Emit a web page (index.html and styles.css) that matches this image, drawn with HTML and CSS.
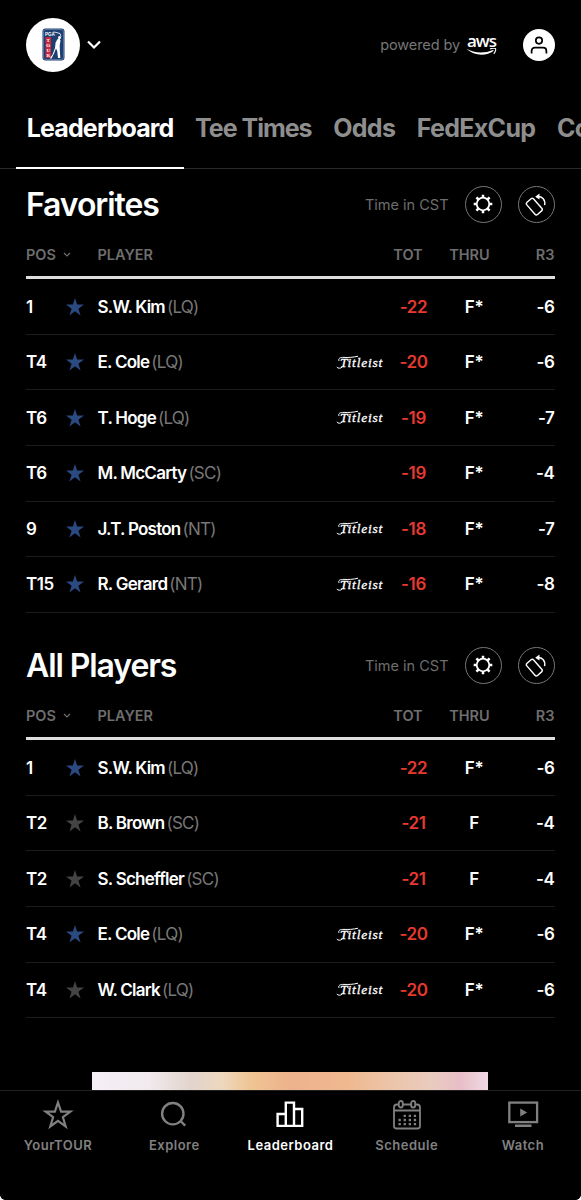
FILE: index.html
```html
<!DOCTYPE html>
<html lang="en">
<head>
<meta charset="UTF-8">
<meta name="viewport" content="width=device-width, initial-scale=1.0">
<title>PGA TOUR - Leaderboard</title>
<link rel="stylesheet" href="styles.css">
</head>
<body>
<!-- shared icons -->
<svg class="sprite" aria-hidden="true">
  <symbol id="star" viewBox="0 0 18 18"><path d="M9 0l2.1 6.6H18l-5.6 4.1 2.2 6.8L9 13.3l-5.6 4.2 2.2-6.8L0 6.6h6.9z" fill="currentColor"/></symbol>
  <symbol id="gear" viewBox="0 0 20 20">
    <circle cx="10" cy="10" r="6.3" fill="none" stroke="currentColor" stroke-width="1.8"/>
    <path d="M10 .7v3M10 16.3v3M.7 10h3M16.3 10h3M3.4 3.4l2.1 2.1M14.5 14.5l2.1 2.1M16.6 3.4l-2.1 2.1M5.5 14.5l-2.1 2.1" stroke="currentColor" stroke-width="2.5"/>
  </symbol>
  <symbol id="rotate" viewBox="0 0 24 24">
    <rect x="5.8" y="6.6" width="9" height="16" rx="1.8" transform="rotate(-41 10.3 14.6)" fill="none" stroke="currentColor" stroke-width="1.4"/>
    <path d="M12.500 4.600c5.500-.8 9.200 3.200 8.100 8.600" fill="none" stroke="currentColor" stroke-width="1.400"/>
    <path d="M15.500 1.600v6L11.200 4.800z" fill="currentColor"/>
  </symbol>
  <symbol id="caret" viewBox="0 0 8 6"><path d="M1 1l3 3 3-3" fill="none" stroke="currentColor" stroke-width="1.2"/></symbol>
  <symbol id="swash" viewBox="0 0 48 14"><path d="M3 6C2 3.400 4 2.200 8 2.400s9 .1 14-1.200M6 12.200C4.500 13.600 2 13.600.8 12" fill="none" stroke="currentColor" stroke-width="1"/></symbol>
</svg>

<header>
  <div class="brand">
    <div class="brand-circle">
      <svg width="23" height="33" viewBox="0 0 23 33">
        <rect x=".5" y=".5" width="22" height="32" rx="3" fill="#1d3f72"/>
        <rect x="1.500" y="1.500" width="20" height="30" rx="2.200" fill="none" stroke="#8fa3c0" stroke-width=".5"/>
        <rect x="3.500" y="9" width="5.500" height="21" fill="#c8283c"/>
        <text x="3" y="8.300" class="logo-pga">PGA</text>
        <g class="logo-tour"><text x="6.250" y="14.300">T</text><text x="6.250" y="19.300">O</text><text x="6.250" y="24.300">U</text><text x="6.250" y="29.300">R</text></g>
        <circle cx="17.500" cy="9.500" r="1.500" fill="#fff"/>
        <path d="M11.500 3.800l6.500 1.700 1 3" fill="none" stroke="#fff" stroke-width=".8"/>
        <path d="M17.500 10.500l1 2-.8 5 .2 6 .4 6.500h-2.300l-.8-7-1.200-2.500-2 5-2.500 5H7.800l2.700-4 2.500-6.500.6-5.500 2-3.500z" fill="#fff"/>
      </svg>
    </div>
    <svg class="brand-caret" width="14" height="10" viewBox="0 0 14 10"><path d="M1 1.500l6 6 6-6" fill="none" stroke="#fff" stroke-width="2.200"/></svg>
  </div>
  <div class="header-right">
    <span class="powered">powered by</span>
    <div class="aws">
      <span>aws</span>
      <svg width="31" height="8" viewBox="0 0 31 8"><path d="M.3.800c8 4.500 18.500 4.700 26.700 1.100l.8.900C20 8.600 8 8 .3.800z" fill="#fff"/><path d="M24 .900c2-.8 5.200-1 5.600-.1.400 1-.5 3.800-1.900 5" fill="none" stroke="#fff" stroke-width="1.100"/></svg>
    </div>
    <div class="profile">
      <svg width="18" height="18" viewBox="0 0 18 18" fill="none" stroke="#000" stroke-width="1.700"><circle cx="9" cy="4.600" r="3.200"/><path d="M1.600 17.500v-2.600c0-2 1.200-3.300 3.300-3.300h8.200c2.100 0 3.300 1.300 3.300 3.300v2.600"/></svg>
    </div>
  </div>
</header>

<div class="tabs">
  <a class="tab active">Leaderboard</a>
  <a class="tab tee-times">Tee Times</a>
  <a class="tab">Odds</a>
  <a class="tab">FedExCup</a>
  <a class="tab">Course</a>
</div>

<main>
  <section class="board">
    <div class="board-title">
      <h2>Favorites</h2>
      <span class="timezone">Time in CST</span>
      <div class="round-btn"><svg width="20" height="20"><use href="#gear"/></svg></div>
      <div class="round-btn"><svg width="24" height="24"><use href="#rotate"/></svg></div>
    </div>
    <div class="board-head">
      <span>POS <svg width="8" height="6"><use href="#caret"/></svg></span><span>PLAYER</span><span class="mid">TOT</span><span class="mid">THRU</span><span class="end">R3</span>
    </div>
    <div class="row"><span>1</span><svg class="star fav"><use href="#star"/></svg><span class="name">S.W. Kim <em>(LQ)</em></span><span></span><span class="tot">-22</span><span class="mid">F*</span><span class="end">-6</span></div>
    <div class="row"><span>T4</span><svg class="star fav"><use href="#star"/></svg><span class="name">E. Cole <em>(LQ)</em></span><span class="sponsor">Titleist<svg><use href="#swash"/></svg></span><span class="tot">-20</span><span class="mid">F*</span><span class="end">-6</span></div>
    <div class="row"><span>T6</span><svg class="star fav"><use href="#star"/></svg><span class="name">T. Hoge <em>(LQ)</em></span><span class="sponsor">Titleist<svg><use href="#swash"/></svg></span><span class="tot">-19</span><span class="mid">F*</span><span class="end">-7</span></div>
    <div class="row"><span>T6</span><svg class="star fav"><use href="#star"/></svg><span class="name">M. McCarty <em>(SC)</em></span><span></span><span class="tot">-19</span><span class="mid">F*</span><span class="end">-4</span></div>
    <div class="row"><span>9</span><svg class="star fav"><use href="#star"/></svg><span class="name">J.T. Poston <em>(NT)</em></span><span class="sponsor">Titleist<svg><use href="#swash"/></svg></span><span class="tot">-18</span><span class="mid">F*</span><span class="end">-7</span></div>
    <div class="row"><span>T15</span><svg class="star fav"><use href="#star"/></svg><span class="name">R. Gerard <em>(NT)</em></span><span class="sponsor">Titleist<svg><use href="#swash"/></svg></span><span class="tot">-16</span><span class="mid">F*</span><span class="end">-8</span></div>
  </section>

  <section class="board">
    <div class="board-title">
      <h2>All Players</h2>
      <span class="timezone">Time in CST</span>
      <div class="round-btn"><svg width="20" height="20"><use href="#gear"/></svg></div>
      <div class="round-btn"><svg width="24" height="24"><use href="#rotate"/></svg></div>
    </div>
    <div class="board-head">
      <span>POS <svg width="8" height="6"><use href="#caret"/></svg></span><span>PLAYER</span><span class="mid">TOT</span><span class="mid">THRU</span><span class="end">R3</span>
    </div>
    <div class="row"><span>1</span><svg class="star fav"><use href="#star"/></svg><span class="name">S.W. Kim <em>(LQ)</em></span><span></span><span class="tot">-22</span><span class="mid">F*</span><span class="end">-6</span></div>
    <div class="row"><span>T2</span><svg class="star"><use href="#star"/></svg><span class="name">B. Brown <em>(SC)</em></span><span></span><span class="tot">-21</span><span class="mid">F</span><span class="end">-4</span></div>
    <div class="row"><span>T2</span><svg class="star"><use href="#star"/></svg><span class="name">S. Scheffler <em>(SC)</em></span><span></span><span class="tot">-21</span><span class="mid">F</span><span class="end">-4</span></div>
    <div class="row"><span>T4</span><svg class="star fav"><use href="#star"/></svg><span class="name">E. Cole <em>(LQ)</em></span><span class="sponsor">Titleist<svg><use href="#swash"/></svg></span><span class="tot">-20</span><span class="mid">F*</span><span class="end">-6</span></div>
    <div class="row"><span>T4</span><svg class="star"><use href="#star"/></svg><span class="name">W. Clark <em>(LQ)</em></span><span class="sponsor">Titleist<svg><use href="#swash"/></svg></span><span class="tot">-20</span><span class="mid">F*</span><span class="end">-6</span></div>
  </section>

  <div class="ad"></div>
</main>

<nav>
  <a>
    <svg width="32" height="32" viewBox="0 0 32 32"><path d="M16 3.500l3.100 9.100h9.300l-7.500 5.600 2.800 9.200-7.700-5.500-7.700 5.500 2.800-9.200-7.500-5.600h9.300z" fill="none" stroke="currentColor" stroke-width="2.200"/></svg>
    YourTOUR
  </a>
  <a>
    <svg width="32" height="32" viewBox="0 0 32 32" fill="none" stroke="currentColor" stroke-width="2.400"><circle cx="14.800" cy="14.700" r="10.700"/><path d="M22.500 22l4.700 4.700"/></svg>
    Explore
  </a>
  <a class="active">
    <svg width="32" height="32" viewBox="0 0 32 32" fill="none" stroke="currentColor" stroke-width="2.400"><path d="M3.600 26.900V15h8.200v11.900zM11.800 26.900V3.600H20v23.300zM20 26.900V10h8.200v16.900z"/></svg>
    Leaderboard
  </a>
  <a>
    <svg width="32" height="32" viewBox="0 0 32 32" fill="none" stroke="currentColor" stroke-width="1.800">
      <path d="M7.500 5.500H6a3 3 0 0 0-3 3v18.500a2.500 2.500 0 0 0 2.500 2.500h21a2.500 2.500 0 0 0 2.500-2.500V8.500a3 3 0 0 0-3-3h-1.500M12 5.500h8M3 11.500h26"/>
      <rect x="7.800" y="2" width="4" height="6.500" rx="2"/><rect x="20.200" y="2" width="4" height="6.500" rx="2"/>
      <path d="M12.600 16.800h14M7.500 21h19M7.500 25.200h19" stroke-width="2.300" stroke-dasharray="2.300 2.800"/>
    </svg>
    Schedule
  </a>
  <a>
    <svg width="32" height="32" viewBox="0 0 32 32"><rect x="2.300" y="3.600" width="27.800" height="19.500" fill="none" stroke="currentColor" stroke-width="2.300"/><path d="M13.200 9.400l7 4-7 4zM8 25.600h16.500v2.300H8z" fill="currentColor"/></svg>
    Watch
  </a>
</nav>
</body>
</html>
```
FILE: styles.css
```css
* {
  box-sizing: border-box;
}
html {
  background: #fff;
}
body {
  margin: 0;
  height: 1200px;
  overflow: hidden;
  display: flex;
  flex-direction: column;
  background: #000;
  color: #fff;
  border-radius: 0 0 6px 6px;
  font-family: Inter, "Liberation Sans", sans-serif;
}
svg {
  flex-shrink: 0;
}
.sprite {
  position: absolute;
  width: 0;
  height: 0;
}

/* top bar */
header {
  display: flex;
  justify-content: space-between;
  align-items: center;
  height: 90px;
  padding: 0 26px;
}
.brand {
  display: flex;
  align-items: center;
}
.brand-circle {
  display: flex;
  align-items: center;
  justify-content: center;
  width: 54px;
  height: 54px;
  border-radius: 50%;
  background: #fff;
}
.brand-caret {
  margin-left: 7px;
}
.logo-pga {
  font: bold 4.500px "Liberation Sans", sans-serif;
  fill: #fff;
}
.logo-tour {
  font: bold 5px "Liberation Serif", serif;
  fill: #fff;
  text-anchor: middle;
}
.header-right {
  display: flex;
  align-items: center;
}
.powered {
  color: #777;
  font-size: 14.500px;
  letter-spacing: -.1px;
}
.aws {
  display: flex;
  flex-direction: column;
  align-items: center;
  width: 31px;
  margin: 0 26px 0 6px;
}
.aws span {
  font: 600 17px/15px "Open Sans", sans-serif;
  letter-spacing: -1px;
  height: 15px;
}
.profile {
  display: flex;
  align-items: center;
  justify-content: center;
  width: 32px;
  height: 32px;
  border-radius: 50%;
  background: #fff;
}

/* tabs */
.tabs {
  display: flex;
  height: 80px;
  padding-left: 16px;
  box-shadow: inset 0 -1px #2a2a2a;
  overflow: hidden;
}
.tab {
  flex-shrink: 0;
  height: 80px;
  padding: 0 10.800px;
  color: #8e8e8e;
  font-size: 25px;
  font-weight: 700;
  line-height: 76px;
  letter-spacing: -.7px;
}
.tab.active {
  color: #fff;
  border-bottom: 3px solid #fff;
  letter-spacing: -.87px;
}
.tab.tee-times {
  letter-spacing: -1px;
}

/* leaderboards */
main {
  flex: 1;
  padding: 0 26.500px 0 26px;
}
.board {
  height: 461px;
}
.board-title {
  display: flex;
  align-items: center;
  height: 70px;
}
.board-title h2 {
  flex: 1;
  margin: 0;
  font-size: 32px;
  font-weight: 600;
  letter-spacing: -1.100px;
}
.timezone {
  color: #6e6e6e;
  font-size: 14.500px;
}
.round-btn {
  display: flex;
  align-items: center;
  justify-content: center;
  width: 37px;
  height: 37px;
  margin-left: 16px;
  border: 1.500px solid #777;
  border-radius: 50%;
}
.board-head {
  display: grid;
  grid-template-columns: 71.500px 1fr 56px 67px 51.500px;
  align-items: center;
  height: 40px;
  padding-bottom: 6px;
  border-bottom: 3px solid #dedede;
  color: #6e6e6e;
  font-size: 14.500px;
  font-weight: 600;
}
.board-head svg {
  margin: 0 0 2px 3px;
}
.row {
  display: grid;
  grid-template-columns: 39.500px 32px 1fr 54px 47px 74px 43.500px;
  align-items: center;
  height: 55.550px;
  border-bottom: 1px solid #1c1c1c;
  font-size: 17px;
  font-weight: 600;
  letter-spacing: -.4px;
}
.mid {
  text-align: center;
}
.end {
  text-align: right;
}
.star {
  width: 18px;
  height: 18px;
  color: #444;
}
.star.fav {
  color: #2b4a82;
}
.name {
  letter-spacing: -.75px;
}
.name em {
  color: #777;
  font-style: normal;
  font-weight: 400;
  margin-left: -1.500px;
}
.tot {
  color: #e6392f;
  text-align: center;
}
.sponsor {
  position: relative;
  padding: 1px 0 0 4px;
  font: italic 13.500px "Liberation Serif", serif;
  letter-spacing: .8px;
  -webkit-text-stroke: .3px #fff;
}
.sponsor svg {
  position: absolute;
  left: 0;
  top: 1px;
  width: 48px;
  height: 14px;
}
.ad {
  width: 396px;
  height: 18px;
  margin: -19px auto 0;
  background: linear-gradient(90deg, #f5eff6 0, #f1ebef 14%, #e2d4cd 25%, #edd7bd 33%, #efc593 40%, #edb28d 50%, #efb990 65%, #ecc5aa 76%, #e9cbc0 86%, #e8bec8 93%, #efd9e4 100%);
}

/* bottom bar */
nav {
  display: grid;
  grid-template-columns: repeat(5, 1fr);
  height: 110px;
  border-top: 1px solid #202020;
  background: #000;
}
nav a {
  display: flex;
  flex-direction: column;
  align-items: center;
  padding-top: 8px;
  color: #808080;
  font-size: 13px;
  font-weight: 600;
  letter-spacing: .5px;
  line-height: 28px;
}
nav a.active {
  color: #fff;
}
```
